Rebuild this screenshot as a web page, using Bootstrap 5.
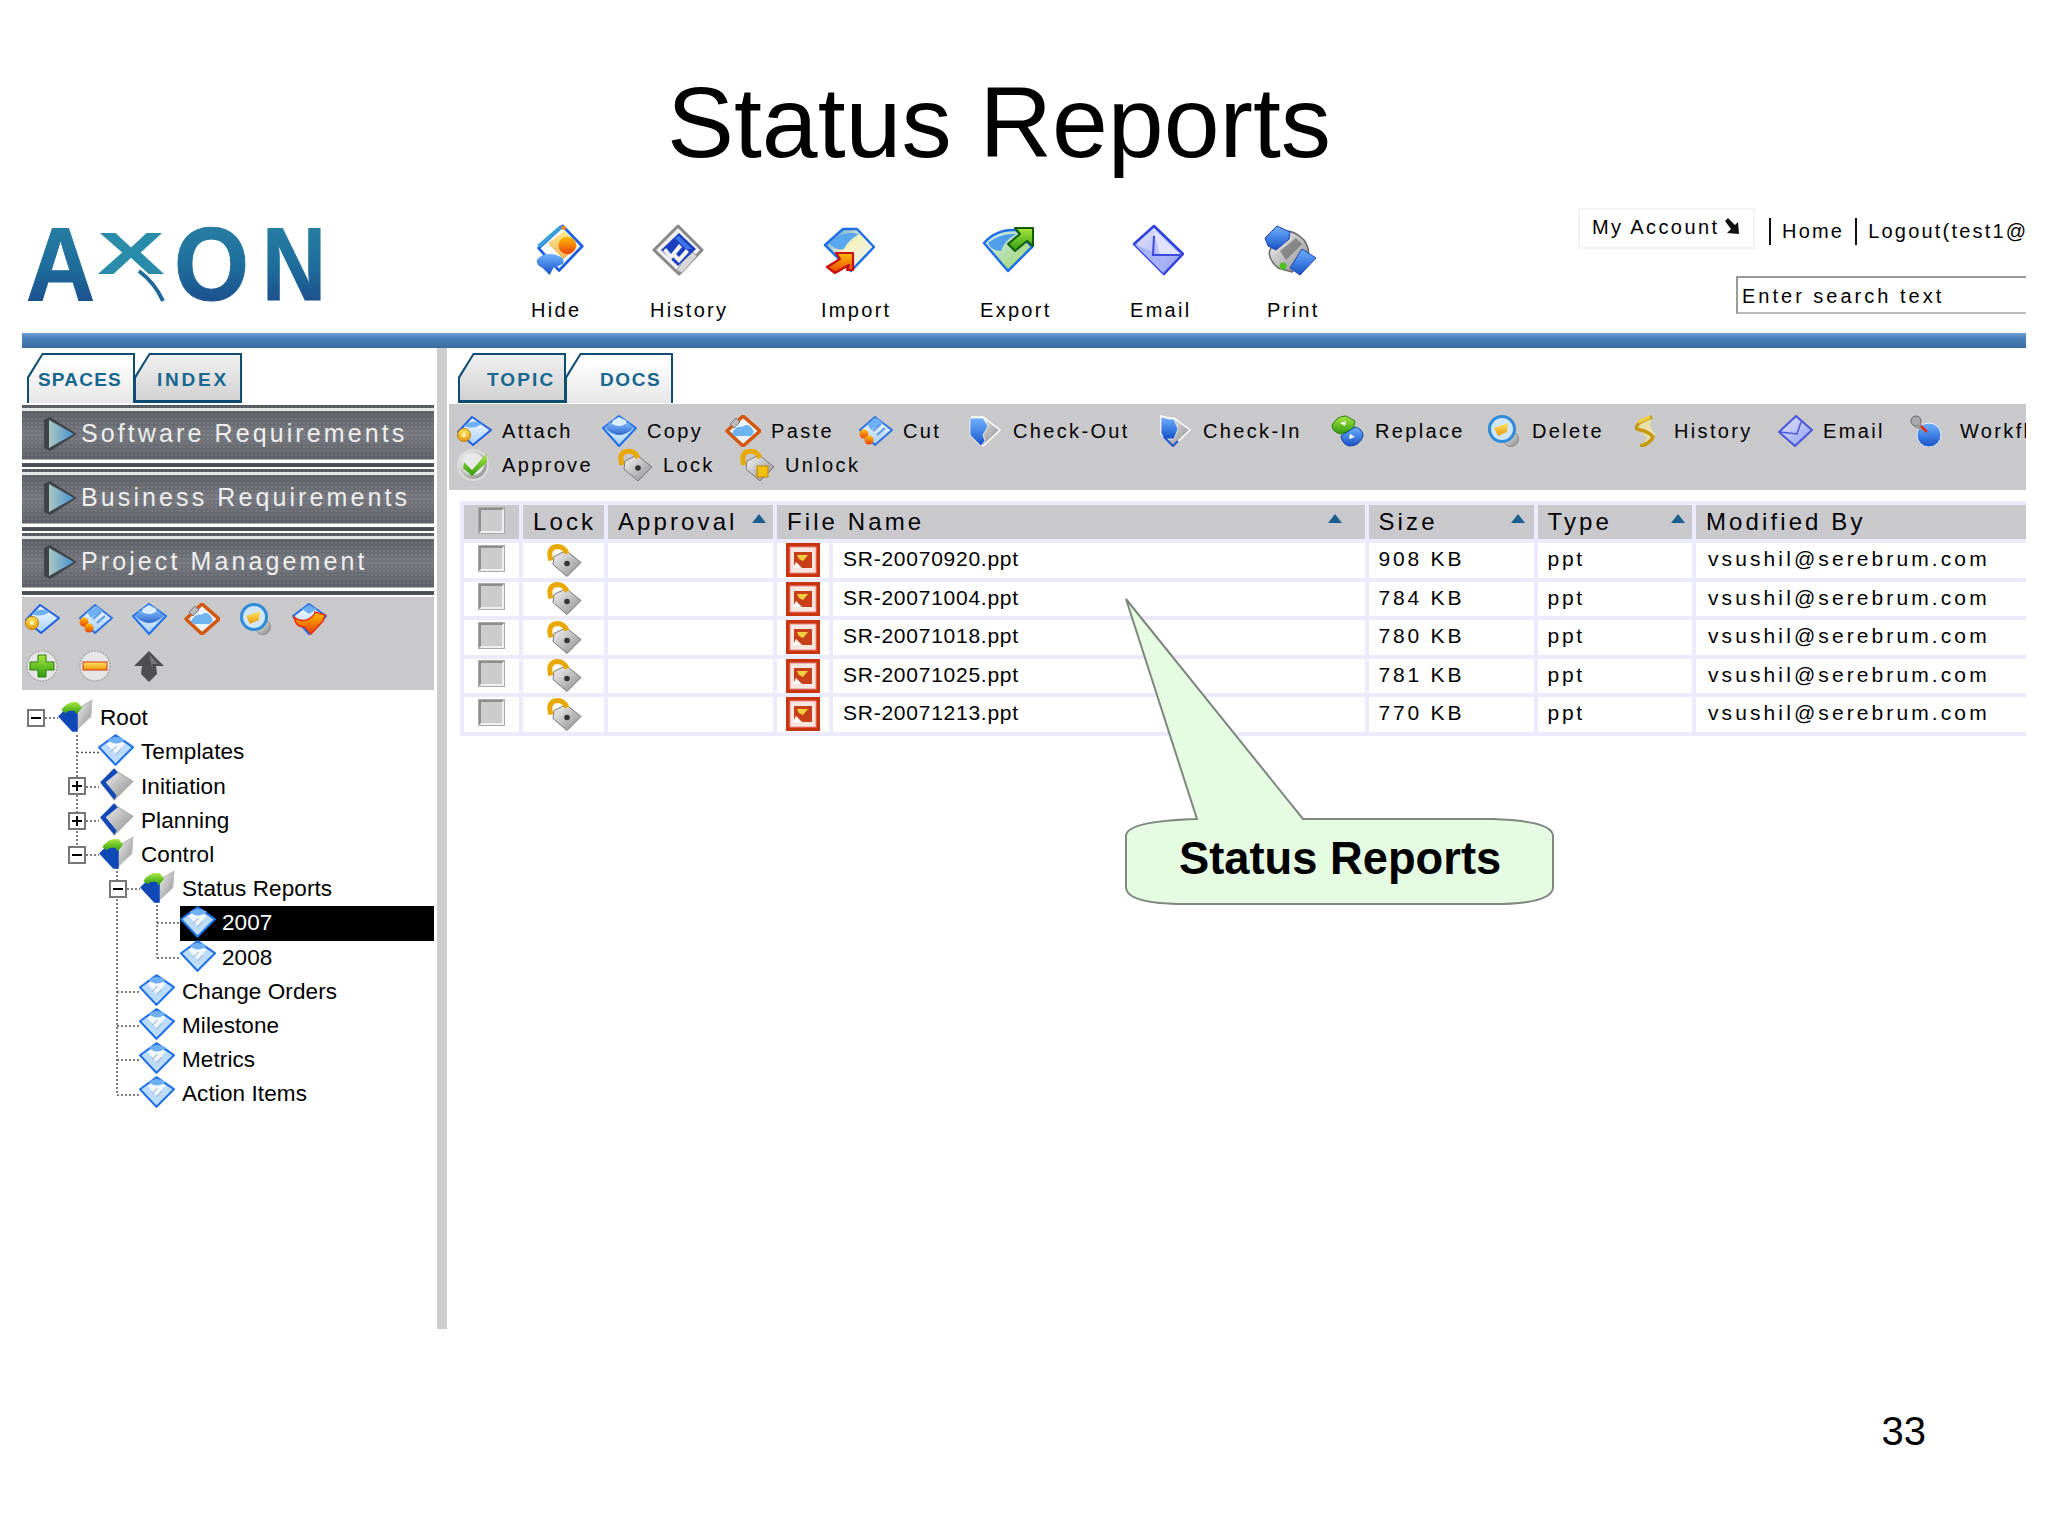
<!DOCTYPE html>
<html lang="en">
<head>
<meta charset="utf-8">
<title>Status Reports</title>
<link href="https://cdn.jsdelivr.net/npm/bootstrap@5.3.0/dist/css/bootstrap.min.css" rel="stylesheet">
<style>
body{background:#fff;color:#000;font-family:"Liberation Sans",Arial,sans-serif;margin:0}
.slide{width:2048px;height:1536px;position:relative;overflow:hidden}
.slide-title{width:1998px;height:205px;padding-top:72px;font-size:100.4px;line-height:1;font-weight:400;margin:0;text-align:center;letter-spacing:0}
.appx{margin-left:22px;width:2004px;overflow:hidden}
.hdr{height:128px}
.logo-wrap{width:509px;flex:none;padding-left:3px}
.logo-wrap svg{display:block}
.tb-grid{display:grid;grid-template-columns:119px 171px 159px 150px 134px 314px;padding-top:19px;flex:none}
.tb-ic{width:52px;height:52px;display:block;margin-left:2px}
.tb-lab{display:block;font-size:20px;letter-spacing:2.3px;line-height:24px;margin-top:22px}
.tb-print .tb-ic{margin-left:0}
.tb-print .tb-lab{margin-left:3px}
.hdr-right{width:448px;flex:none;overflow:hidden}
.acct-row{height:71px;padding-top:3px;font-size:20px}
.acct-box{width:177px;height:41px;flex:none;border:2px solid #f3f3f3;padding-left:12px;letter-spacing:2.4px;line-height:34px;white-space:nowrap}
.acct-box svg{width:17px;height:17px;margin-left:5px;vertical-align:-1px}
.acct-link{letter-spacing:2.2px;border-left:2px solid #111;height:27px;line-height:27px;margin-top:10px;padding-left:11px;margin-left:14px;flex:none}
.acct-link-b{margin-left:11px;white-space:nowrap}
.srch{margin-left:158px;width:320px;height:38px;border:0;border-top:2px solid #999;border-left:2px solid #999;border-bottom:2px solid #bbb;border-radius:0;padding:2px 0 0 4px;font-size:20px;letter-spacing:3px;color:#000;font-family:inherit;background:#fff;box-shadow:none}
.blue-bar{height:15px;background:linear-gradient(#6b9fd6 0,#4b82bd 35%,#3a6c9f 100%)}
.main-x{height:981px}
.left-x{width:412px;flex:none}
.div-x{width:10px;flex:none;margin:0 2px 0 3px;background:#cdcdd0}
.right-x{width:1577px;flex:none;overflow:hidden}
.tab-row{height:57px;padding-top:5px}
.tab-row-l{padding-left:5px}
.tab-row-r{padding-left:9px;height:56px}
.tabx{position:relative;width:108px;height:50px;margin-right:-1px;background:#0f4d73;clip-path:polygon(15px 0,100% 0,100% 100%,0 100%,0 24px);font-weight:700;font-size:19px;letter-spacing:2.1px;color:#17678f}
.tabx::before{content:"";position:absolute;inset:2px 2px 0 2px;clip-path:polygon(14px 0,100% 0,100% 100%,0 100%,0 23px);background:linear-gradient(#fff 10%,#e6e6e6)}
.tabx-off::before{inset:2px 2px 3px 2px;background:linear-gradient(#f0f0f0,#d2d2d2)}
.tabx span{position:relative;display:block;padding-top:13px;white-space:nowrap}
.tab-sp span{padding-left:11px;letter-spacing:1.2px}
.tab-ix span{padding-left:23px;letter-spacing:2.8px}
.tab-tp span{padding-left:29px}
.tab-dc span{padding-left:35px;letter-spacing:1.6px}
.barx{height:62px;margin-bottom:2px;padding:0 0 4px 21px;color:#eee;font-size:25px;letter-spacing:3.1px;white-space:nowrap;background:
 radial-gradient(circle,rgba(255,255,255,.09) 1px,transparent 1px) 0 0/4px 4px,
 linear-gradient(#55585c 0,#55585c 3px,#e4e6e4 3px,#e4e6e4 6px,#5b5f65 6px,#74777d 30px,#5a5d63 54px,#fff 55px,#fff 58px,#4a4e54 58px,#4a4e54 62px);overflow:hidden}
.barx svg{width:34px;height:36px;margin-right:4px;flex:none}
.panel-g{background:#c9c9cb;height:93px;padding-top:6px}
.ic-grid{display:grid;grid-template-columns:repeat(6,53.4px);grid-auto-rows:47px;padding-left:2px}
.ic-l{width:36px;height:32px;display:block}
.treex{position:relative;margin-top:11px;padding-bottom:4px;font-size:22.5px;letter-spacing:.1px}
.tree-lines{position:absolute;left:0;top:0;width:412px;height:420px}
.trow{position:relative;height:34.2px;white-space:nowrap}
.lv0{padding-left:5px}.lv1{padding-left:46px}.lv2{padding-left:87px}.lv3{padding-left:158px}
.expd{width:18px;height:18px;flex:none;margin-right:12px;border:2px solid #777;background:#fff linear-gradient(#000,#000) center/10px 2px no-repeat}
.expd-p{background:linear-gradient(#000,#000) center/10px 2px no-repeat,linear-gradient(#000,#000) center/2px 10px no-repeat,#fff}
.expd-e{width:18px;flex:none;margin-right:12px}
.tree-ic{width:36px;height:34px;flex:none;margin-right:7px;margin-top:-4px}
.lv3 .tree-ic{margin-right:6px;margin-top:-2px}
.tree-sel{background:#000;color:#fff;height:35px}
.tool-x{background:#c9c9cb;height:86px;padding:10px 0 0 7px;font-size:20px;letter-spacing:2.35px}
.tool-row{display:grid;height:34px}
.tool-r1{grid-template-columns:145px 124px 132px 110px 190px 172px 157px 142px 149px 129px 200px}
.tool-r2{grid-template-columns:161px 122px 200px}
.tool-it{display:flex;align-items:center;white-space:nowrap}
.tool-it svg{width:36px;height:32px;margin-right:10px;flex:none}
.tool-it-w svg{margin-right:18px}
.rep-wrap{margin:11px 0 0 11px;width:1580px}
.table.rep{table-layout:fixed;width:1580px;margin:0;border-collapse:separate;border-spacing:4px;background:#ecebfb;font-size:21px;line-height:1.2;letter-spacing:.75px;color:#000}
.table.rep>:not(caption)>*>*{padding:0 0 3px 10px;border:0;height:34.5px;background:#fff;box-shadow:none;color:#000;vertical-align:middle;white-space:nowrap;overflow:hidden;font-weight:400}
.table.rep>thead>tr>th{background:#c9c9cd;font-size:24px;letter-spacing:3.1px;height:34px;padding:0 0 0 10px}
.table.rep>*>tr>.cell-ctr{padding:0;text-align:center}
.table.rep>*>tr>.cell-ppt{padding:0;text-align:center}
.table.rep>tbody>tr>.cell-sz{letter-spacing:2.8px}
.table.rep>tbody>tr>.cell-ty{letter-spacing:2.7px}
.table.rep>tbody>tr>.cell-md{padding-left:12px;letter-spacing:3.1px}
.c1{width:55px}.c2{width:81px}.c3{width:165px}.c4{width:52px}.c5{width:531.5px}.c6{width:165px}.c7{width:154.5px}.c8{width:340px}
.chk{display:block;margin:0 auto 4px;width:25px;height:25px;background:#ccc;border:2px solid;border-color:#8d8d8d #f0f0f0 #f0f0f0 #8d8d8d;outline:1px solid #aaa}
.lock-ic{width:36px;height:33px;display:block;margin:0 auto}
.ppt-ic{width:34px;height:34px;display:block;margin:0 auto}
.srt{width:0;height:0;border-left:7px solid transparent;border-right:7px solid transparent;border-bottom:9px solid #1a5f8f;margin-top:-6px;flex:none}
.srt-a{margin-right:7px}.srt-f{margin-right:23px}.srt-s{margin-right:9px}.srt-t{margin-right:7px}
.pg-no{width:1926px;margin-top:82px;font-size:40px;line-height:1;text-align:right}
.callout{position:absolute;left:1120px;top:595px;width:440px;height:315px}
</style>
</head>
<body>
<svg width="0" height="0" class="position-absolute" aria-hidden="true">
<defs>
<linearGradient id="gBlu" x1="0" y1="0" x2="0" y2="1"><stop offset="0" stop-color="#fff"/><stop offset="1" stop-color="#a4cff9"/></linearGradient>
<linearGradient id="gDeep" x1="0" y1="0" x2="0" y2="1"><stop offset="0" stop-color="#70b2ff"/><stop offset="1" stop-color="#1552c8"/></linearGradient>
<linearGradient id="gYel" x1="0" y1="0" x2="0" y2="1"><stop offset="0" stop-color="#ffe65e"/><stop offset="1" stop-color="#e8980f"/></linearGradient>
<linearGradient id="gOrg" x1="0" y1="0" x2="0" y2="1"><stop offset="0" stop-color="#ffc000"/><stop offset="1" stop-color="#e8400c"/></linearGradient>
<linearGradient id="gGrn" x1="0" y1="0" x2="0" y2="1"><stop offset="0" stop-color="#a8e83e"/><stop offset="1" stop-color="#2f9a10"/></linearGradient>
<linearGradient id="gGry" x1="0" y1="0" x2="1" y2="1"><stop offset="0" stop-color="#f6f6f6"/><stop offset="1" stop-color="#8a8a8a"/></linearGradient>
<linearGradient id="gPur" x1="0" y1="0" x2="1" y2="1"><stop offset="0" stop-color="#eaeaff"/><stop offset="1" stop-color="#8a9af0"/></linearGradient>
<linearGradient id="gSand" x1="0" y1="0" x2="1" y2="1"><stop offset="0" stop-color="#2f8fe8"/><stop offset=".45" stop-color="#f6f2c0"/><stop offset="1" stop-color="#e6f3ff"/></linearGradient>
<linearGradient id="gExp" x1="0" y1="0" x2="1" y2="1"><stop offset="0" stop-color="#cfe8ff"/><stop offset="1" stop-color="#9ed65a"/></linearGradient>
<linearGradient id="gLogo" x1="0" y1="0" x2="0" y2="1"><stop offset="0" stop-color="#2a86a8"/><stop offset=".55" stop-color="#1e6b9a"/><stop offset="1" stop-color="#1b3f86"/></linearGradient>
<linearGradient id="gTri" x1="0" y1="0" x2="1" y2="0"><stop offset="0" stop-color="#a8c8c0"/><stop offset="1" stop-color="#4a90d0"/></linearGradient>

<symbol id="i-attach" viewBox="0 0 36 32"><path d="M16 2 35 15 17 30 2 17Z" fill="url(#gBlu)" stroke="#1f5fe0" stroke-width="2" stroke-linejoin="round"/><path d="M8 11Q16 3 26 9 17 15 8 11Z" fill="#6fb0f5"/><circle cx="8" cy="20" r="6.5" fill="url(#gYel)" stroke="#b87a00"/><circle cx="8" cy="20" r="2.2" fill="#fff5b0"/></symbol>
<symbol id="i-copy" viewBox="0 0 36 32"><path d="M18 1 35 13 18 31 2 13Z" fill="url(#gBlu)" stroke="#1f6fe8" stroke-width="2" stroke-linejoin="round"/><path d="M4 13Q18 27 33 13L27 7Q18 15 9 7Z" fill="url(#gDeep)" opacity=".85"/><path d="M11 6 18 2 26 6 18 11Z" fill="#d8ecff"/></symbol>
<symbol id="i-paste" viewBox="0 0 36 32"><path d="M18 1 35 16 18 31 2 16Z" fill="#eaf4ff" stroke="#d4570f" stroke-width="3.5" stroke-linejoin="round"/><path d="M7 18Q12 10 17 12 23 7 28 15 30 19 25 21H11Q7 21 7 18Z" fill="#6db3ee"/><path d="M5 9 11 3 15 7 9 13Z" fill="#bbb" stroke="#777"/></symbol>
<symbol id="i-cut" viewBox="0 0 36 32"><path d="M18 2 35 15 18 30 3 15Z" fill="url(#gBlu)" stroke="#2f72e0" stroke-width="2" stroke-linejoin="round"/><path d="M10 9 20 3 26 8 14 15Z" fill="#6fb0f5"/><path d="M16 16 24 9M20 20 28 13" stroke="#5c9ae6" stroke-width="2"/><circle cx="7" cy="19" r="4.5" fill="url(#gOrg)"/><circle cx="12" cy="25" r="4.5" fill="url(#gOrg)"/></symbol>
<symbol id="i-out" viewBox="0 0 36 32"><path d="M5 2H16L33 15 16 31 4 20Z" fill="url(#gGry)" stroke="#fff" stroke-width="1.5"/><path d="M3 3H16L21 11 16 20 18 26 14 31 3 20Z" fill="url(#gDeep)" stroke="#fff" stroke-width=".7"/></symbol>
<symbol id="i-in" viewBox="0 0 36 32"><path d="M4 1 12 3H17L33 15 16 31 4 19Z" fill="url(#gGry)" stroke="#fff" stroke-width="1.5"/><path d="M4 2 12 4H17L21 14 17 24H7L4 18Z" fill="url(#gDeep)" stroke="#fff" stroke-width=".7"/><path d="M7 22 16 31 21 26" fill="none" stroke="#1f4fc8" stroke-width="2"/></symbol>
<symbol id="i-replace" viewBox="0 0 36 32"><path d="M3 10Q8 1 17 1L26 6 24 15 12 19Q3 17 3 10Z" fill="url(#gGrn)" stroke="#2a7a10"/><path d="M12 21 26 12Q34 14 34 21 31 31 20 31 13 29 12 21Z" fill="url(#gDeep)" stroke="#1040a0"/><path d="M11 8 17 6 16 11ZM26 22 20 24 21 19Z" fill="#fff"/></symbol>
<symbol id="i-delete" viewBox="0 0 36 32"><circle cx="25" cy="24" r="7.5" fill="url(#gGry)" stroke="#888"/><circle cx="16" cy="14" r="12.5" fill="#cfe6fb" stroke="#2f8ad8" stroke-width="3"/><path d="M8 13 22 8 21 17 12 21Z" fill="url(#gYel)"/></symbol>
<symbol id="i-hist" viewBox="0 0 36 32"><path d="M8 8 24 2 22 10 27 20Q27 29 14 30L19 23 10 14Z" fill="#e8e0a8"/><path d="M24 2Q6 8 9 14 22 17 25 22 22 29 12 31" fill="none" stroke="#c4980f" stroke-width="3.5"/><path d="M10 7 22 2" stroke="#f0d040" stroke-width="3"/></symbol>
<symbol id="i-email" viewBox="0 0 36 32"><path d="M19 1 35 15 18 31 2 17Z" fill="url(#gPur)" stroke="#4a55d8" stroke-width="2" stroke-linejoin="round"/><path d="M3 17 20 19 24 7" fill="none" stroke="#4a55d8" stroke-width="1.5"/></symbol>
<symbol id="i-flow" viewBox="0 0 36 32"><circle cx="23" cy="20" r="12" fill="url(#gDeep)" stroke="#fff" stroke-width=".8"/><circle cx="10" cy="6" r="5" fill="#aaa" stroke="#666"/><path d="M8 12 15 8 19 17" fill="#999"/><path d="M15 11 21 17" stroke="#d83020" stroke-width="2.5"/></symbol>
<symbol id="i-appr" viewBox="0 0 36 32"><circle cx="17" cy="16" r="15" fill="url(#gGry)" stroke="#dcdcdc" stroke-width="2"/><circle cx="17" cy="15" r="11" fill="#e9e9e9"/><path d="M8 13 16 21 30 5 31 13 16 27 7 19Z" fill="url(#gGrn)"/></symbol>
<symbol id="i-lock" viewBox="0 0 36 32"><path d="M8 12 20 6 35 18 21 32 7 20Z" fill="url(#gGry)" stroke="#777" stroke-linejoin="round"/><circle cx="21" cy="19" r="2.8" fill="#333"/><path d="M5 16Q1 3 11 2 18 2 21 9" fill="none" stroke="#e8a800" stroke-width="5"/></symbol>
<symbol id="i-unlock" viewBox="0 0 36 32"><path d="M8 12 20 6 35 18 21 32 7 20Z" fill="url(#gGry)" stroke="#777" stroke-linejoin="round"/><rect x="18" y="17" width="11" height="11" fill="#f0c010" stroke="#c08000"/><path d="M5 16Q1 3 11 2 18 2 21 9" fill="none" stroke="#e8a800" stroke-width="5"/></symbol>
<symbol id="i-reload" viewBox="0 0 36 32"><path d="M18 1 35 13 18 31 2 13Z" fill="url(#gBlu)" stroke="#1f6fe8" stroke-width="2" stroke-linejoin="round"/><path d="M11 6 18 2 26 6 18 11Z" fill="#6fb0f5"/><path d="M3 14Q10 20 18 16 24 12 24 9L34 12 32 18 20 31 14 24Q5 25 3 14Z" fill="url(#gOrg)" stroke="#e83010" stroke-width="1.5"/></symbol>
<symbol id="i-plus" viewBox="0 0 36 32"><circle cx="18" cy="16" r="15" fill="#e6e6e6" stroke="#ababab" stroke-width="1.5" stroke-dasharray="2 1"/><path d="M14 5H22V12H30V20H22V27H14V20H6V12H14Z" fill="url(#gGrn)" stroke="#2a7a10"/></symbol>
<symbol id="i-minus" viewBox="0 0 36 32"><circle cx="18" cy="16" r="15" fill="#e6e6e6" stroke="#ababab" stroke-width="1.5" stroke-dasharray="2 1"/><rect x="6" y="12" width="24" height="8" fill="url(#gYel)" stroke="#d83010"/></symbol>
<symbol id="i-up" viewBox="0 0 36 32"><path d="M18 1 33 16H25L26 24 18 32 10 24 11 16H3Z" fill="#4e4e50"/><path d="M18 4 27 14H21L22 22" fill="#777"/></symbol>

<symbol id="t-cal" viewBox="0 0 33 31"><path d="M16 2 32 13 16 29 1 13Z" fill="#f2f8ff" stroke="#1f6fe8" stroke-width="2" stroke-linejoin="round"/><path d="M9 6Q16 1 25 6 16 13 9 6Z" fill="#6fb0f5"/><path d="M2 13 16 27 31 13 25 9 16 19 7 9Z" fill="#8fc4f8" opacity=".55"/><path d="M12 17 17 12M16 20 21 15" stroke="#a8b8d0" stroke-width="1"/></symbol>
<symbol id="t-open" viewBox="0 0 33 31"><path d="M17 10 32 1 31 16 17 29Z" fill="url(#gGry)" stroke="#bbb"/><path d="M1 16 9 8 19 6V30L14 30Z" fill="#1148b8"/><path d="M4 10Q10 1 19 3L23 8 18 14 16 11Q10 10 8 13Z" fill="url(#gGrn)"/></symbol>
<symbol id="t-closed" viewBox="0 0 33 31"><path d="M14 2 32 13 15 30 3 15Z" fill="url(#gGry)" stroke="#aaa"/><path d="M15 1 2 14 15 30 17 26 7 14 18 5Z" fill="#1148b8"/></symbol>

<symbol id="h-hide" viewBox="0 0 52 56"><path d="M30 2 51 24 26 50 4 26Z" fill="#f6fbff" stroke="#1f5fe0" stroke-width="3" stroke-linejoin="round"/><path d="M14 21 32 7 46 24 31 38Z" fill="url(#gYel)" opacity=".7"/><circle cx="35" cy="23" r="9.5" fill="url(#gOrg)"/><path d="M4 24 28 3" stroke="#3aa0d8" stroke-width="4"/><circle cx="31" cy="4" r="2.5" fill="#e88a20"/><path d="M2 39Q8 30 22 33 34 36 30 43L20 47 16 55 8 47Q2 45 2 39Z" fill="url(#gDeep)"/></symbol>
<symbol id="h-hist" viewBox="0 0 52 52"><path d="M26 2 50 26 27 50 2 26Z" fill="#f2f2f2" stroke="#888" stroke-width="3" stroke-linejoin="round"/><path d="M38 26 45 32 30 49 25 46Z" fill="#d8d8d8" stroke="#999"/><path d="M27 9 44 25 26 42 9 26Z" fill="#1b3fc0"/><path d="M27 12 40 25 34 25 23 14Z" fill="#3f74e8"/><path d="M14 24 19 30 27 20 30 23 19 36 11 27ZM24 30 27 33 34 25 37 28 27 39 21 33Z" fill="#f4f4f4"/></symbol>
<symbol id="h-imp" viewBox="0 0 52 46"><path d="M20 2H34L51 20 28 44 2 18Z" fill="url(#gSand)" stroke="#1f6fe8" stroke-width="2.5" stroke-linejoin="round"/><path d="M6 16Q20 2 36 7 24 14 21 22 12 24 6 16Z" fill="#5aa6ee"/><path d="M30 26V43H24L26 38 12 46 4 40 17 32 13 26Z" fill="url(#gOrg)" stroke="#c81010" stroke-width="2.2" stroke-linejoin="round"/></symbol>
<symbol id="h-exp" viewBox="0 0 52 46"><path d="M2 16Q14 2 34 3L50 20 26 44Z" fill="url(#gExp)" stroke="#1f6fe8" stroke-width="2.5" stroke-linejoin="round"/><path d="M6 16Q18 6 34 7 22 14 19 24 10 24 6 16Z" fill="#4e9eea"/><path d="M33 1H51V19L45 14 33 24 26 17 38 7Z" fill="url(#gGrn)" stroke="#115c0a" stroke-width="2" stroke-linejoin="round"/></symbol>
<symbol id="h-mail" viewBox="0 0 52 52"><path d="M22 2 51 30 32 50 2 20Z" fill="url(#gPur)" stroke="#2f3fe0" stroke-width="2.5" stroke-linejoin="round"/><path d="M2 20 28 31 32 50 2 20Z" fill="#a8b2f6"/><path d="M28 31 22 6 48 30Z" fill="#e2e4ff"/><path d="M22 12 21 31H48" fill="none" stroke="#3d4ae0" stroke-width="2"/></symbol>
<symbol id="h-print" viewBox="0 0 52 52"><path d="M16 8Q28 4 40 16 48 28 42 36L28 48 14 44Q3 34 6 26Z" fill="url(#gGry)" stroke="#666" stroke-width="1.5"/><path d="M16 27 32 14 38 20 22 36Z" fill="#555" opacity=".55"/><path d="M1 14 13 2 26 8 25 15 12 26 4 22Z" fill="url(#gDeep)" stroke="#2040b0"/><path d="M38 25 52 34 36 51 26 44Z" fill="url(#gDeep)" stroke="#2040b0"/><circle cx="19" cy="42" r="3.5" fill="#50c020"/></symbol>

<symbol id="i-ppt" viewBox="0 0 34 34"><rect width="34" height="34" fill="#c9340f"/><rect x="4" y="4" width="26" height="26" fill="#f6e8e0" stroke="#e88"/><rect x="8" y="9" width="18" height="16" fill="#c8401a"/><path d="M11 12H22L17 18 13 16Z" fill="#f4d040"/><path d="M7 25 10 19 16 25Z" fill="#fff"/></symbol>
<symbol id="i-tri" viewBox="0 0 34 36"><path d="M1 4 7 1 34 18 7 35 1 32Z" fill="#3f4246"/><path d="M6 4 31 18 6 32Z" fill="url(#gTri)"/></symbol>
</defs>
</svg>

<div class="slide">
  <h1 class="slide-title">Status Reports</h1>

  <div class="appx">
    <div class="hdr d-flex">
      <div class="logo-wrap">
        <svg width="304" height="122" viewBox="0 0 304 122" role="img" aria-label="AXON">
          <g fill="url(#gLogo)" stroke="url(#gLogo)" stroke-width="1" font-family="'Liberation Sans',Arial,sans-serif" font-size="104" font-weight="700">
            <text x="1" y="95" textLength="69" lengthAdjust="spacingAndGlyphs">A</text>
            <text x="149" y="95" textLength="75" lengthAdjust="spacingAndGlyphs">O</text>
            <text x="237" y="95" textLength="64" lengthAdjust="spacingAndGlyphs">N</text>
          </g>
          <text x="72" y="69" font-family="'Liberation Sans',Arial,sans-serif" font-size="60" font-weight="700" fill="#2a8cab" textLength="68" lengthAdjust="spacingAndGlyphs">X</text>
          <path d="M114 66Q130 78 138 96" fill="none" stroke="#1e6b9a" stroke-width="4"/>
        </svg>
      </div>
      <div class="tb-grid">
        <div><svg class="tb-ic"><use href="#h-hide"/></svg><span class="tb-lab">Hide</span></div>
        <div><svg class="tb-ic"><use href="#h-hist"/></svg><span class="tb-lab">History</span></div>
        <div><svg class="tb-ic"><use href="#h-imp"/></svg><span class="tb-lab">Import</span></div>
        <div><svg class="tb-ic"><use href="#h-exp"/></svg><span class="tb-lab">Export</span></div>
        <div><svg class="tb-ic"><use href="#h-mail"/></svg><span class="tb-lab">Email</span></div>
        <div class="tb-print"><svg class="tb-ic"><use href="#h-print"/></svg><span class="tb-lab">Print</span></div>
      </div>
      <div class="hdr-right">
        <div class="acct-row d-flex">
          <div class="acct-box">My Account<svg viewBox="0 0 17 17"><path d="M1 3 4 0 11 7 14 4 15 16 3 15 7 11Z" fill="#111"/></svg></div>
          <div class="acct-link">Home</div>
          <div class="acct-link acct-link-b">Logout(test1@</div>
        </div>
        <input class="form-control srch" type="text" value="Enter search text">
      </div>
    </div>
    <div class="blue-bar"></div>

    <div class="main-x d-flex">
      <div class="left-x">
        <div class="tab-row tab-row-l d-flex">
          <div class="tabx tab-sp"><span>SPACES</span></div>
          <div class="tabx tabx-off tab-ix"><span>INDEX</span></div>
        </div>
        <div class="barx d-flex align-items-center"><svg><use href="#i-tri"/></svg>Software Requirements</div>
        <div class="barx d-flex align-items-center"><svg><use href="#i-tri"/></svg>Business Requirements</div>
        <div class="barx d-flex align-items-center"><svg><use href="#i-tri"/></svg>Project Management</div>
        <div class="panel-g">
          <div class="ic-grid">
            <svg class="ic-l"><use href="#i-attach"/></svg>
            <svg class="ic-l"><use href="#i-cut"/></svg>
            <svg class="ic-l"><use href="#i-copy"/></svg>
            <svg class="ic-l"><use href="#i-paste"/></svg>
            <svg class="ic-l"><use href="#i-delete"/></svg>
            <svg class="ic-l"><use href="#i-reload"/></svg>
            <svg class="ic-l"><use href="#i-plus"/></svg>
            <svg class="ic-l"><use href="#i-minus"/></svg>
            <svg class="ic-l"><use href="#i-up"/></svg>
          </div>
        </div>
        <div class="treex">
          <svg class="tree-lines" viewBox="0 0 412 420" fill="none" stroke="#555" stroke-width="1.5" stroke-dasharray="2 2">
            <path d="M23 17H36M55 34V144M55 51.5H77M64 86H77M64 120H77M64 154H77M95 166V393M105 188H118M95 291H118M95 325H118M95 359H118M95 394H118M135 200V257M135 222H158M135 257H158"/>
          </svg>
          <div class="trow lv0 d-flex align-items-center"><span class="expd"></span><svg class="tree-ic"><use href="#t-open"/></svg>Root</div>
          <div class="trow lv1 d-flex align-items-center"><span class="expd-e"></span><svg class="tree-ic"><use href="#t-cal"/></svg>Templates</div>
          <div class="trow lv1 d-flex align-items-center"><span class="expd expd-p"></span><svg class="tree-ic"><use href="#t-closed"/></svg>Initiation</div>
          <div class="trow lv1 d-flex align-items-center"><span class="expd expd-p"></span><svg class="tree-ic"><use href="#t-closed"/></svg>Planning</div>
          <div class="trow lv1 d-flex align-items-center"><span class="expd"></span><svg class="tree-ic"><use href="#t-open"/></svg>Control</div>
          <div class="trow lv2 d-flex align-items-center"><span class="expd"></span><svg class="tree-ic"><use href="#t-open"/></svg>Status Reports</div>
          <div class="trow lv3 d-flex align-items-center"><div class="tree-sel d-flex align-items-center flex-grow-1"><svg class="tree-ic"><use href="#t-cal"/></svg>2007</div></div>
          <div class="trow lv3 d-flex align-items-center"><svg class="tree-ic"><use href="#t-cal"/></svg>2008</div>
          <div class="trow lv2 d-flex align-items-center"><span class="expd-e"></span><svg class="tree-ic"><use href="#t-cal"/></svg>Change Orders</div>
          <div class="trow lv2 d-flex align-items-center"><span class="expd-e"></span><svg class="tree-ic"><use href="#t-cal"/></svg>Milestone</div>
          <div class="trow lv2 d-flex align-items-center"><span class="expd-e"></span><svg class="tree-ic"><use href="#t-cal"/></svg>Metrics</div>
          <div class="trow lv2 d-flex align-items-center"><span class="expd-e"></span><svg class="tree-ic"><use href="#t-cal"/></svg>Action Items</div>
        </div>
      </div>
      <div class="div-x"></div>
      <div class="right-x">
        <div class="tab-row tab-row-r d-flex">
          <div class="tabx tabx-off tab-tp"><span>TOPIC</span></div>
          <div class="tabx tab-dc"><span>DOCS</span></div>
        </div>
        <div class="tool-x">
          <div class="tool-row tool-r1">
            <div class="tool-it"><svg><use href="#i-attach"/></svg>Attach</div>
            <div class="tool-it"><svg><use href="#i-copy"/></svg>Copy</div>
            <div class="tool-it"><svg><use href="#i-paste"/></svg>Paste</div>
            <div class="tool-it"><svg><use href="#i-cut"/></svg>Cut</div>
            <div class="tool-it"><svg><use href="#i-out"/></svg>Check-Out</div>
            <div class="tool-it"><svg><use href="#i-in"/></svg>Check-In</div>
            <div class="tool-it"><svg><use href="#i-replace"/></svg>Replace</div>
            <div class="tool-it"><svg><use href="#i-delete"/></svg>Delete</div>
            <div class="tool-it"><svg><use href="#i-hist"/></svg>History</div>
            <div class="tool-it"><svg><use href="#i-email"/></svg>Email</div>
            <div class="tool-it tool-it-w"><svg><use href="#i-flow"/></svg>Workflow</div>
          </div>
          <div class="tool-row tool-r2">
            <div class="tool-it"><svg><use href="#i-appr"/></svg>Approve</div>
            <div class="tool-it"><svg><use href="#i-lock"/></svg>Lock</div>
            <div class="tool-it"><svg><use href="#i-unlock"/></svg>Unlock</div>
          </div>
        </div>
        <div class="rep-wrap">
          <table class="table rep">
            <colgroup><col class="c1"><col class="c2"><col class="c3"><col class="c4"><col class="c5"><col class="c6"><col class="c7"><col class="c8"></colgroup>
            <thead>
              <tr>
                <th class="cell-ctr"><span class="chk"></span></th>
                <th>Lock</th>
                <th><div class="d-flex justify-content-between align-items-center">Approval<span class="srt srt-a"></span></div></th>
                <th colspan="2"><div class="d-flex justify-content-between align-items-center">File Name<span class="srt srt-f"></span></div></th>
                <th><div class="d-flex justify-content-between align-items-center">Size<span class="srt srt-s"></span></div></th>
                <th><div class="d-flex justify-content-between align-items-center">Type<span class="srt srt-t"></span></div></th>
                <th>Modified By</th>
              </tr>
            </thead>
            <tbody>
              <tr><td class="cell-ctr"><span class="chk"></span></td><td class="cell-ctr"><svg class="lock-ic"><use href="#i-lock"/></svg></td><td></td><td class="cell-ppt"><svg class="ppt-ic"><use href="#i-ppt"/></svg></td><td>SR-20070920.ppt</td><td class="cell-sz">908 KB</td><td class="cell-ty">ppt</td><td class="cell-md">vsushil@serebrum.com</td></tr>
              <tr><td class="cell-ctr"><span class="chk"></span></td><td class="cell-ctr"><svg class="lock-ic"><use href="#i-lock"/></svg></td><td></td><td class="cell-ppt"><svg class="ppt-ic"><use href="#i-ppt"/></svg></td><td>SR-20071004.ppt</td><td class="cell-sz">784 KB</td><td class="cell-ty">ppt</td><td class="cell-md">vsushil@serebrum.com</td></tr>
              <tr><td class="cell-ctr"><span class="chk"></span></td><td class="cell-ctr"><svg class="lock-ic"><use href="#i-lock"/></svg></td><td></td><td class="cell-ppt"><svg class="ppt-ic"><use href="#i-ppt"/></svg></td><td>SR-20071018.ppt</td><td class="cell-sz">780 KB</td><td class="cell-ty">ppt</td><td class="cell-md">vsushil@serebrum.com</td></tr>
              <tr><td class="cell-ctr"><span class="chk"></span></td><td class="cell-ctr"><svg class="lock-ic"><use href="#i-lock"/></svg></td><td></td><td class="cell-ppt"><svg class="ppt-ic"><use href="#i-ppt"/></svg></td><td>SR-20071025.ppt</td><td class="cell-sz">781 KB</td><td class="cell-ty">ppt</td><td class="cell-md">vsushil@serebrum.com</td></tr>
              <tr><td class="cell-ctr"><span class="chk"></span></td><td class="cell-ctr"><svg class="lock-ic"><use href="#i-lock"/></svg></td><td></td><td class="cell-ppt"><svg class="ppt-ic"><use href="#i-ppt"/></svg></td><td>SR-20071213.ppt</td><td class="cell-sz">770 KB</td><td class="cell-ty">ppt</td><td class="cell-md">vsushil@serebrum.com</td></tr>
            </tbody>
          </table>
        </div>
      </div>
    </div>
  </div>

  <div class="pg-no">33</div>

  <svg class="callout" viewBox="0 0 440 315">
    <path d="M77 224 6 4 183 224H373Q433 226 433 241V292Q433 309 373 309H66Q6 309 6 292V241Q6 226 77 224Z" fill="#e5fbe2" stroke="#7d877d" stroke-width="2"/>
    <text x="59" y="279" font-family="'Liberation Sans',Arial,sans-serif" font-size="45.3" font-weight="700" fill="#000">Status Reports</text>
  </svg>
</div>
<script src="https://cdn.jsdelivr.net/npm/bootstrap@5.3.0/dist/js/bootstrap.bundle.min.js"></script>
</body>
</html>
